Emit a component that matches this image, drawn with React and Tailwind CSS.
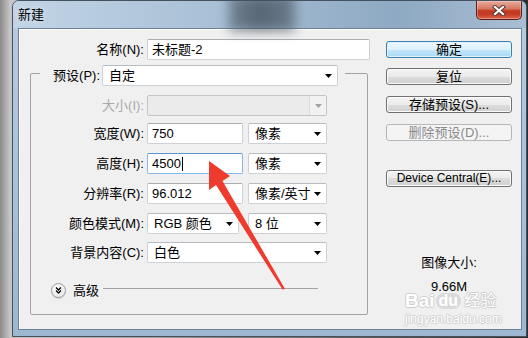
import React from "react";

const F = "font-['Liberation_Sans','Noto_Sans_CJK_SC',sans-serif]";

function Tri({ gray }) {
  return (
    <svg width="7" height="4" viewBox="0 0 7 4" className="shrink-0">
      <path d="M0 0H7L3.5 4Z" fill={gray ? "#a3a3a3" : "#000"} />
    </svg>
  );
}

function Input({ value, w, focus, caret }) {
  return (
    <div
      className={`h-[21px] ${w} bg-white border rounded-[2px] flex items-center pl-[4px] ${
        focus ? "border-[#85b8e8] border-t-[#5b95cc]" : "border-[#cdd0d5] border-t-[#abadb3]"
      }`}
    >
      <span className="leading-[16px]">{value}</span>
      {caret && <span className="w-px h-[14px] bg-black ml-px" />}
    </div>
  );
}

function Select({ value, w }) {
  return (
    <div className={`h-[21px] ${w} bg-white border border-[#cdd0d5] border-t-[#b8bbc1] rounded-[2px] flex items-center justify-between pl-[6px] pr-[5px]`}>
      <span className="leading-[16px] whitespace-nowrap">{value}</span>
      <Tri />
    </div>
  );
}

function Btn({ children, kind, latin }) {
  const base = "h-[17px] w-[126px] rounded-[3px] border flex items-center justify-center leading-[15px] whitespace-nowrap";
  const cls =
    kind === "default"
      ? "border-[#3c7fb1] bg-[linear-gradient(180deg,#eef8fe_0%,#dcf1fd_50%,#c3e6fb_50%,#acdaf6_100%)] shadow-[inset_0_0_0_1px_#dff3fd]"
      : kind === "disabled"
      ? "border-[#b3b7ba] bg-[#f4f4f4] text-[#8a8a8a]"
      : "border-[#707070] bg-[linear-gradient(180deg,#f3f3f3_0%,#ebebeb_50%,#dddddd_50%,#d0d0d0_100%)] shadow-[inset_0_0_0_1px_#fbfbfb]";
  return <div className={`${base} ${cls} ${latin ? "text-[12px]" : "text-[13px]"}`}>{children}</div>;
}

function Row({ label, children, mt, disabled }) {
  return (
    <div className={`flex items-center h-[21px] ${mt}`}>
      <div className={`w-[113px] text-right leading-[16px] whitespace-nowrap ${disabled ? "text-[#a9a9a9]" : ""}`}>{label}</div>
      <div className="ml-[3px] flex gap-[5px]">{children}</div>
    </div>
  );
}

export default function App() {
  return (
    <div className={`relative w-[528px] h-[338px] overflow-hidden bg-[linear-gradient(90deg,#8a8a8a,#c6c6c6_10px,#2e2e2e_527px)] ${F} text-[13px] text-black`}>
      <div className="ml-[12px] w-[515px] h-[337px] rounded-t-[7px] border border-[#44525f] bg-[linear-gradient(180deg,#b9cce0,#9db7d1)] flex flex-col overflow-hidden">
        {/* title bar */}
        <div className="relative h-[27px] flex items-start justify-between bg-[linear-gradient(90deg,#c2d4e6,#a8bfd5_40%,#8ea9c3_75%,#a9bed3)]">
          <div className="absolute left-[216px] top-[-6px] w-[66px] h-[36px] bg-[linear-gradient(90deg,#5b6976,#37434e_45%,#56636f)] opacity-70 blur-[6px]" />
          <span className="relative pl-[5px] pt-[5px] leading-[17px] text-[13px] [text-shadow:0_0_5px_#e8f0f8]">新建</span>
          <div className="relative mr-[4px] w-[46px] h-[19px] rounded-b-[5px] border border-t-0 border-[#5e1f16] bg-[linear-gradient(180deg,#e7ab9b_0%,#d77a64_42%,#c23820_55%,#c63e28_78%,#de6a50_100%)] shadow-[inset_0_0_0_1px_rgba(255,230,220,0.35)] flex items-center justify-center">
            <svg width="14" height="11" viewBox="0 0 14 11">
              <path d="M3 2L11 9M11 2L3 9" stroke="#5a3a33" strokeWidth="4.2" strokeLinecap="square" />
              <path d="M3 2L11 9M11 2L3 9" stroke="#fff" strokeWidth="2.2" strokeLinecap="square" />
            </svg>
          </div>
        </div>
        {/* body frame */}
        <div className="flex-1 flex pl-[5px] pr-[4px] pb-[6px]">
          <div className="flex-1 border border-[#6d8298] bg-[#f0f0f0] flex shadow-[inset_1px_1px_0_#fff]">
            {/* left */}
            <div className="w-[351px] pt-[10px] pl-[11px] shrink-0">
              <div className="flex items-center h-[21px]">
                <div className="w-[114px] text-right leading-[16px]">名称(N):</div>
                <div className="ml-[3px]">
                  <Input value="未标题-2" w="w-[223px]" />
                </div>
              </div>
              <fieldset className="w-[338px] border border-[#a3a3a3] rounded-[2px] pb-[16px]">
                <legend className="ml-[9px] pt-[5px] pr-[7px]">
                  <div className="flex items-center">
                    <div className="w-[60px] text-right leading-[16px] whitespace-nowrap">预设(P):</div>
                    <div className="ml-[2px]">
                      <Select value="自定" w="w-[236px]" />
                    </div>
                  </div>
                </legend>
                <Row label="大小(I):" mt="mt-[9px]" disabled>
                  <div className="h-[21px] w-[180px] bg-[#ebebeb] border border-[#c5c5c5] rounded-[2px] flex justify-end">
                    <div className="w-[17px] h-full border-l border-[#d9d9d9] bg-[#f2f2f2] flex items-center justify-center">
                      <Tri gray />
                    </div>
                  </div>
                </Row>
                <Row label="宽度(W):" mt="mt-[7px]">
                  <Input value="750" w="w-[96px]" />
                  <Select value="像素" w="w-[79px]" />
                </Row>
                <Row label="高度(H):" mt="mt-[9px]">
                  <Input value="4500" w="w-[96px]" focus caret />
                  <Select value="像素" w="w-[79px]" />
                </Row>
                <Row label="分辨率(R):" mt="mt-[9px]">
                  <Input value="96.012" w="w-[96px]" />
                  <Select value="像素/英寸" w="w-[79px]" />
                </Row>
                <Row label="颜色模式(M):" mt="mt-[9px]">
                  <div className="flex gap-[9px]">
                    <Select value="RGB 颜色" w="w-[92px]" />
                    <Select value="8 位" w="w-[79px]" />
                  </div>
                </Row>
                <Row label="背景内容(C):" mt="mt-[8px]">
                  <Select value="白色" w="w-[180px]" />
                </Row>
                <div className="mt-[20px] h-[15px] flex items-center pl-[20px]">
                  <div className="w-[15px] h-[15px] rounded-full border border-[#9c9c9c] bg-[radial-gradient(circle_at_40%_35%,#ffffff,#e2e2e2)] flex items-center justify-center shadow-[0_1px_1px_rgba(0,0,0,0.15)]">
                    <svg width="9" height="9" viewBox="0 0 9 9">
                      <path d="M2 1.5L4.5 4L7 1.5M2 4.5L4.5 7L7 4.5" stroke="#000" strokeWidth="1.3" fill="none" />
                    </svg>
                  </div>
                  <span className="ml-[7px] leading-[16px]">高级</span>
                  <div className="ml-[4px] mr-[49px] mb-[4px] flex-1 h-px bg-[#a3a3a3]" />
                </div>
              </fieldset>
            </div>
            {/* right */}
            <div className="ml-[16px] pt-[12px] w-[126px] flex flex-col items-center">
              <Btn kind="default">确定</Btn>
              <div className="mt-[10px]"><Btn>复位</Btn></div>
              <div className="mt-[11px]"><Btn>存储预设(S)...</Btn></div>
              <div className="mt-[11px]"><Btn kind="disabled">删除预设(D)...</Btn></div>
              <div className="mt-[29px]"><Btn latin>Device Central(E)...</Btn></div>
              <div className="mt-[68px] leading-[16px]">图像大小:</div>
              <div className="mt-[11px] leading-[10px] font-['Liberation_Sans',sans-serif]">9.66M</div>
            </div>
          </div>
        </div>
      </div>

      {/* watermark */}
      <div className="absolute left-[405px] top-[293px] flex flex-col items-start pointer-events-none">
        <div className="flex items-center font-bold text-[19px] leading-[16px] text-white [text-shadow:1px_0_0_#cfcfcf,-1px_0_0_#cfcfcf,0_1px_0_#cfcfcf,0_-1px_0_#cfcfcf]">
          <span className="font-['Liberation_Sans',sans-serif]">Bai</span>
          <span className="ml-[1px] px-[3px] rounded-[9px] bg-[#dadada] text-[16px] leading-[16px] font-['Liberation_Sans',sans-serif] [text-shadow:none]">du</span>
          <span className="ml-[3px] text-[16px] font-normal">经验</span>
        </div>
        <div className="mt-[4px] text-[12px] leading-[12px] text-white font-['Liberation_Sans',sans-serif] [text-shadow:1px_0_0_#d2d2d2,-1px_0_0_#d2d2d2,0_1px_0_#d2d2d2,0_-1px_0_#d2d2d2]">
          jingyan.baidu.com
        </div>
      </div>

      {/* red arrow */}
      <svg className="absolute left-0 top-0 pointer-events-none" width="528" height="338" viewBox="0 0 528 338">
        <polygon
          points="209,161 230,176 222.5,181 285,289 282.5,289.5 216,185 209,190"
          fill="#ef3b2e"
        />
      </svg>
    </div>
  );
}
